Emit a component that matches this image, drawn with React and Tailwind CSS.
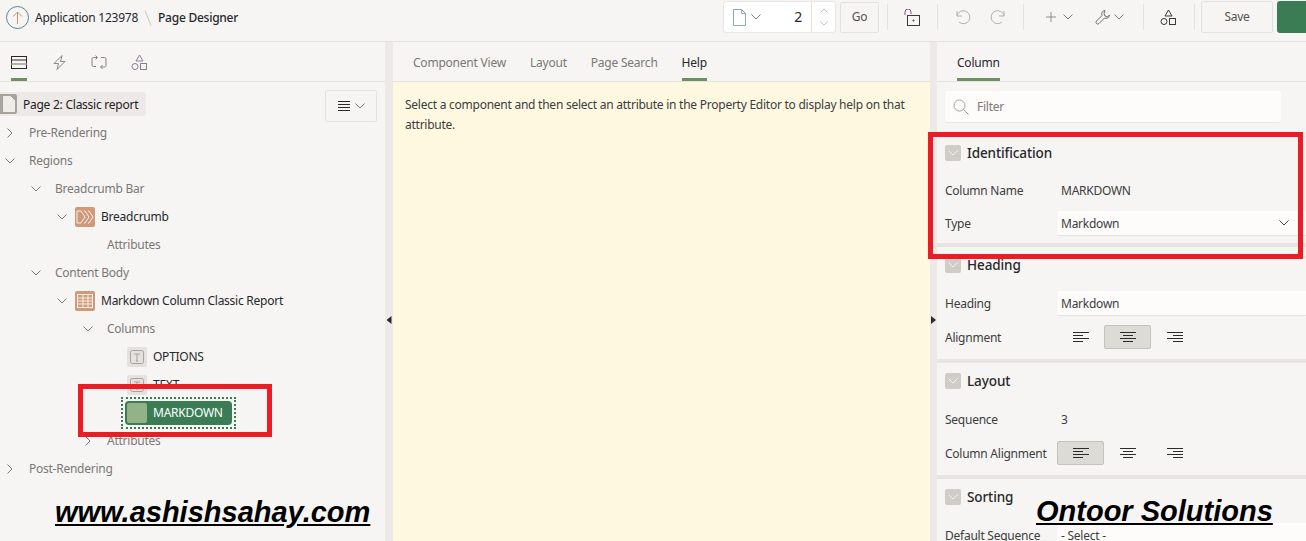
import React from "react";

const Ic = ({ w = 16, h = 16, vb, className = "", children, sw = 1 }) => (
  <svg width={w} height={h} viewBox={vb || `0 0 ${w} ${h}`} fill="none" stroke="currentColor" strokeWidth={sw} className={"shrink-0 " + className}>{children}</svg>
);
const Down = ({ className = "text-[#7d7b79]", w = 10, h = 6 }) => (
  <Ic w={w} h={h} vb="0 0 10 6" className={className}><path d="M.5.5 5 5 9.5.5" /></Ic>
);
const Right = () => (
  <Ic w={6} h={10} className="text-[#7d7b79]"><path d="M.5.5 5 5 .5 9.5" /></Ic>
);
const Shapes = ({ className }) => (
  <Ic w={17} h={17} className={className}><path d="M8.5 1 12 7H5z" /><circle cx="4" cy="12.5" r="3" /><rect x="9.5" y="9.5" width="6" height="6" /></Ic>
);
const AlignIc = ({ kind }) => {
  const d = {
    l: "M0 .5h16M0 3.5h10M0 6.5h16M0 9.5h10",
    c: "M0 .5h16M3 3.5h10M0 6.5h16M3 9.5h10",
    r: "M0 .5h16M6 3.5h10M0 6.5h16M6 9.5h10",
  }[kind];
  return <Ic w={16} h={10} className="text-[#2b2b2b]"><path d={d} /></Ic>;
};

const Row = ({ indent, chev, children, text = "text-[#7b7876]" }) => (
  <div className={`flex h-7 items-center ${indent} ${text}`}>
    <span className="flex w-5 shrink-0 items-center justify-center">
      {chev === "d" && <Down />}
      {chev === "r" && <Right />}
    </span>
    {children}
  </div>
);

const Orange = ({ children }) => (
  <span className="ml-[3px] mr-[6px] flex h-5 w-5 items-center justify-center rounded-[2px] bg-[#cf9a7c] text-[#fbeee2]">{children}</span>
);
const Leaf = ({ label }) => (
  <div className="flex h-7 items-center pl-[127px] text-[#26282b]">
    <span className="mr-[6px] flex h-5 w-5 items-center justify-center rounded-[2px] bg-[#e4e1de] text-[#a5a29f]">
      <Ic w={14} h={14}><rect x=".5" y=".5" width="13" height="13" rx="2" /><path d="M4 4h6M7 4v7M6 11h2" /></Ic>
    </span>
    {label}
  </div>
);

const Tree = () => (
  <div className="flex-1">
    <div className="flex items-start justify-between pr-2 pt-2">
      <div className="mt-[2px] flex h-6 w-[146px] items-center whitespace-nowrap rounded-r-[4px] bg-[#ece9e6] text-[#1f2124]">
        <span className="mr-[6px] flex h-5 w-[17px] items-center justify-center rounded-r-[2px] bg-[#a8a39c]">
          <Ic w={12} h={16}><path d="M.5.5h7l4 4v11H.5z" fill="#efece8" stroke="#efece8" /></Ic>
        </span>
        <span className="pt-px">Page 2: Classic report</span>
      </div>
      <div className="flex h-8 w-[52px] items-center justify-center gap-[5px] rounded-[2px] border border-[#e4e2de]">
        <Ic w={12} h={10} className="text-[#2b2b2b]"><path d="M0 .5h12M0 3.5h12M0 6.5h12M0 9.5h12" /></Ic>
        <Down />
      </div>
    </div>
    <div className="mt-[-3px]">
      <Row chev="r" indent="pl-0">
        <span className="ml-[9px]">Pre-Rendering</span>
      </Row>
      <Row chev="d" indent="pl-0">
        <span className="ml-[9px]">Regions</span>
      </Row>
      <Row chev="d" indent="pl-[26px]">
        <span className="ml-[9px]">Breadcrumb Bar</span>
      </Row>
      <Row chev="d" indent="pl-[52px]" text="text-[#26282b]">
        <Orange>
          <Ic w={18} h={14}><path d="M1 1h4l4 6-4 6H1zM8 1h1l4 6-4 6H8M12 1h1l4 6-4 6h-1" /></Ic>
        </Orange>
        Breadcrumb
      </Row>
      <Row indent="pl-[78px]">
        <span className="ml-[9px]">Attributes</span>
      </Row>
      <Row chev="d" indent="pl-[26px]">
        <span className="ml-[9px]">Content Body</span>
      </Row>
      <Row chev="d" indent="pl-[52px]" text="text-[#26282b]">
        <Orange>
          <Ic w={16} h={14}><rect x=".5" y=".5" width="15" height="13" /><path d="M.5 4h15M.5 7h15M.5 10h15M6 .5v13M11 .5v13" /></Ic>
        </Orange>
        Markdown Column Classic Report
      </Row>
      <Row chev="d" indent="pl-[78px]">
        <span className="ml-[9px]">Columns</span>
      </Row>
      <Leaf label="OPTIONS" />
      <Leaf label="TEXT" />
      <div className="flex h-7 items-center pl-[125px]">
        <div className="outline-2 outline-offset-2 outline-dotted outline-[#3a7d55]">
          <div className="flex h-6 w-[107px] items-center rounded-[4px] bg-[#3a7d55] pl-[2px] text-white">
            <span className="mr-[6px] h-5 w-5 rounded-[2px] bg-[#93b387]" />
            MARKDOWN
          </div>
        </div>
      </div>
      <Row chev="r" indent="pl-[78px]">
        <span className="ml-[9px]">Attributes</span>
      </Row>
      <Row chev="r" indent="pl-0">
        <span className="ml-[9px]">Post-Rendering</span>
      </Row>
    </div>
  </div>
);

const Toggle = () => (
  <span className="mr-[6px] flex h-4 w-4 items-center justify-center rounded-[2px] bg-[#d0cdc8]">
    <Down className="text-[#f8f7f5]" />
  </span>
);

const Group = ({ title, children, pad = "pb-[5px]" }) => (
  <section className={`border-b-4 border-[#e7e4e1] ${pad}`}>
    <div className="flex h-9 items-center pl-2 text-[13.5px] font-medium tracking-[-0.1px] text-[#26282b]">
      <Toggle />
      {title}
    </div>
    <div className="pt-[3px]">{children}</div>
  </section>
);

const Prop = ({ label, children, h = "h-[34px]" }) => (
  <div className={`flex items-center pl-2 ${h}`}>
    <span className="w-28 shrink-0 pt-px text-[#3b3d40]">{label}</span>
    <div className="flex-1">{children}</div>
  </div>
);

const Field = ({ children, chev }) => (
  <div className="flex h-6 items-center justify-between rounded-l-[2px] bg-[#fdfcfa] pl-1 pr-[17px] text-[#3b3d40] shadow-[0_1px_1px_rgba(0,0,0,0.08)]">
    <span className="pt-px">{children}</span>
    {chev && <Down className="text-[#444]" />}
  </div>
);

const Align = ({ active }) => (
  <div className="flex h-6 items-center">
    {["l", "c", "r"].map((k) => (
      <span key={k} className={`flex h-6 w-[47px] items-center justify-center rounded-[2px] border ${active === k ? "border-[#c4c2bc] bg-[#dddbd6]" : "border-transparent"}`}>
        <AlignIc kind={k} />
      </span>
    ))}
  </div>
);

const Tab = ({ children, active }) => (
  <span className={`flex h-full items-center border-b-[3px] pt-[6px] tracking-[-0.22px] ${active ? "border-[#6d9160] text-[#26282b]" : "border-transparent text-[#7b7876]"}`}>{children}</span>
);

const VDiv = () => <span className="block h-[26px] w-px bg-[#e4e2de]" />;

export default function App() {
  return (
    <div className="relative flex h-[541px] w-[1306px] flex-col overflow-hidden bg-[#f6f5f3] text-[12px] leading-5 tracking-[-0.25px] text-[#26282b] [font-family:'Noto_Sans','Open_Sans',sans-serif]">
      <header className="flex h-[42px] shrink-0 items-start justify-between border-b border-[#e2e0dd] pl-[6px] pt-[1px]">
        <div className="flex items-center pt-[5px]">
          <span className="mr-[6px] flex h-[23px] w-[23px] items-center justify-center rounded-full border border-[#4f8a96] text-[#c9935f]">
            <Ic w={11} h={13}><path d="M5.5 13V1M1 5.5 5.5 1 10 5.5" /></Ic>
          </span>
          <span>Application 123978</span>
          <Ic w={8} h={16} className="mx-[6px] text-[#c9c7c4]"><path d="M1 .5 7 15.5" /></Ic>
          <span className="font-medium">Page Designer</span>
        </div>
        <div className="flex h-8 items-center">
          <div className="flex h-[30px] w-[111px] items-center rounded-[2px] bg-white shadow-[0_0_2px_rgba(0,0,0,0.2)]">
            <span className="flex items-center gap-[5px] pl-[9px]">
              <Ic w={13} h={17} className="text-[#8aa7bd]"><path d="M.5.5h8l4 4v12H.5zM8.500.5v4h4" /></Ic>
              <Down />
            </span>
            <span className="flex-1 pr-[9px] text-right text-[14px]">2</span>
            <span className="flex h-full w-6 flex-col items-center justify-center gap-[8px] border-l border-[#e4e2de]">
              <Down className="rotate-180 text-[#b0aeab]" w={8} h={5} />
              <Down className="text-[#b0aeab]" w={8} h={5} />
            </span>
          </div>
          <span className="ml-[5px] flex h-[31px] w-[39px] items-center justify-center rounded-[2px] border border-[#e4e2de] text-[#55524f]">Go</span>
          <span className="ml-2"><VDiv /></span>
          <span className="ml-4 text-[#3a3a3a]">
            <Ic w={16} h={17}><path d="M1 6V3a3 3 0 0 1 6 0v2" stroke="#8c4f8c" /><rect x="3.500" y="6.500" width="12" height="10" /><circle cx="9.500" cy="11.500" r=".6" /></Ic>
          </span>
          <span className="ml-[17px]"><VDiv /></span>
          <span className="ml-[17px] text-[#b3b1ae]">
            <Ic w={16} h={16}><path d="M2 7a6.500 6.500 0 1 1 2 6M2 2v5h5" /></Ic>
          </span>
          <span className="ml-[19px] text-[#b3b1ae]">
            <Ic w={16} h={16}><path d="M14 7a6.500 6.500 0 1 0-2 6M14 2v5H9" /></Ic>
          </span>
          <span className="ml-[17px]"><VDiv /></span>
          <span className="ml-[22px] flex items-center gap-[7px] text-[#8e8c89]">
            <Ic w={10} h={10}><path d="M5 0v10M0 5h10" /></Ic>
            <Down />
          </span>
          <span className="ml-[22px] flex items-center gap-[3px] text-[#6e6c6a]">
            <Ic w={16} h={16}><path d="M10 1.500a3.500 3.500 0 0 0-3 5L1.500 12a1.500 1.500 0 0 0 2.500 2.500L9.500 9a3.500 3.500 0 0 0 5-3L12.500 8 10 7 9 4.500z" /></Ic>
            <Down />
          </span>
          <span className="ml-[19px]"><VDiv /></span>
          <span className="ml-4 text-[#3a3a3a]"><Shapes /></span>
          <span className="ml-[17px]"><VDiv /></span>
          <span className="ml-[6px] flex h-[32px] w-[72px] items-center justify-center rounded-[2px] border border-[#e4e2de] text-[#55524f]">Save</span>
          <span className="ml-1 h-[32px] w-[29px] rounded-l-[3px] bg-[#3a7d55]" />
        </div>
      </header>

      <main className="flex min-h-0 flex-1">
        <aside className="flex w-[385px] shrink-0 flex-col">
          <div className="flex h-10 items-end gap-[24px] border-b border-[#e4e2de] pl-[11px]">
            <span className="flex h-full w-4 flex-col items-center justify-between pt-[14px]">
              <Ic w={16} h={13} className="text-[#2d2430]"><rect x=".5" y=".5" width="15" height="12" /><path d="M.5 4h15" /><path d="M.5 8h15" stroke="#b5b2ae" strokeWidth="2" /></Ic>
              <span className="h-[3px] w-4 bg-[#6d9160]" />
            </span>
            <span className="flex h-full w-4 justify-center pt-[13px] text-[#8a8785]">
              <Ic w={13} h={15}><path d="M9 .5 1 8.500h4.500L4 14.500l8-8H7.500z" /></Ic>
            </span>
            <span className="flex h-full w-4 justify-center pt-[13px] text-[#8a7f92]">
              <Ic w={16} h={15}><path d="M6 2.500H2.500A1.500 1.500 0 0 0 1 4v6a1.500 1.500 0 0 0 1.500 1.500H5M10 12h3.500A1.500 1.500 0 0 0 15 10.500V4a1.500 1.500 0 0 0-1.500-1.500H10M4.500 .5l2 2-2 2M11.500 10l-2 2 2 2" /></Ic>
            </span>
            <span className="flex h-full w-4 justify-center pt-[12px] text-[#8a7f92]"><Shapes /></span>
          </div>
          <Tree />
        </aside>

        <div className="flex w-[8px] shrink-0 justify-center bg-[#ece9e6] pt-[274px]">
          <span className="h-2 w-[5px] bg-[#2b2b2b] [clip-path:polygon(100%_0,100%_100%,0_50%)]" />
        </div>

        <section className="flex w-[537px] shrink-0 flex-col">
          <div className="flex h-10 gap-6 border-b border-[#e4e2de] pl-5">
            <Tab>Component View</Tab>
            <Tab>Layout</Tab>
            <Tab>Page Search</Tab>
            <Tab active>Help</Tab>
          </div>
          <div className="flex-1 bg-[#fff8e1] px-3 pt-[13px] text-[#3b3d40]">
            <p className="w-[515px]">Select a component and then select an attribute in the Property Editor to display help on that attribute.</p>
          </div>
        </section>

        <div className="flex w-[7px] shrink-0 justify-center bg-[#ece9e6] pt-[274px]">
          <span className="h-2 w-[5px] bg-[#2b2b2b] [clip-path:polygon(0_0,100%_50%,0_100%)]" />
        </div>

        <aside className="min-w-0 flex-1">
          <div className="flex h-10 border-b border-[#e4e2de] pl-5">
            <Tab active>Column</Tab>
          </div>
          <div className="px-2 pt-[9px]">
            <div className="flex h-[31px] w-[336px] items-center gap-[8px] rounded-[2px] bg-[#fdfcfa] pl-[8px] text-[#7b7876] shadow-[0_1px_1px_rgba(0,0,0,0.06)]">
              <Ic w={16} h={16} className="text-[#a5a3a0]"><circle cx="6.500" cy="6.500" r="5.500" /><path d="m10.500 10.500 5 5" /></Ic>
              Filter
            </div>
          </div>
          <div className="mt-[13px]">
            <Group title="Identification" pad="pb-1">
              <Prop label="Column Name" h="h-[33px]"><span className="block pl-1 pt-px text-[#3b3d40]">MARKDOWN</span></Prop>
              <Prop label="Type" h="h-8"><Field chev>Markdown</Field></Prop>
            </Group>
            <Group title="Heading">
              <Prop label="Heading"><Field>Markdown</Field></Prop>
              <Prop label="Alignment"><Align active="c" /></Prop>
            </Group>
            <Group title="Layout">
              <Prop label="Sequence"><span className="block pl-1 pt-px text-[#3b3d40]">3</span></Prop>
              <Prop label="Column Alignment"><Align active="l" /></Prop>
            </Group>
            <Group title="Sorting">
              <Prop label="Default Sequence"><Field>- Select -</Field></Prop>
            </Group>
          </div>
        </aside>
      </main>

      <div className="absolute left-[78px] top-[384px] h-[53px] w-[194px] border-[5px] border-[#ed1c24]" />
      <div className="absolute left-[928px] top-[132px] h-[127px] w-[375px] border-[5px] border-[#ed1c24]" />
      <div className="absolute left-[55px] top-[495px] text-[29px] font-bold italic leading-[34px] tracking-normal text-black underline [font-family:'Liberation_Sans',Arial,sans-serif]">www.ashishsahay.com</div>
      <div className="absolute left-[1036px] top-[494px] text-[29px] font-bold italic leading-[34px] tracking-normal text-black underline [font-family:'Liberation_Sans',Arial,sans-serif]">Ontoor Solutions</div>
    </div>
  );
}
